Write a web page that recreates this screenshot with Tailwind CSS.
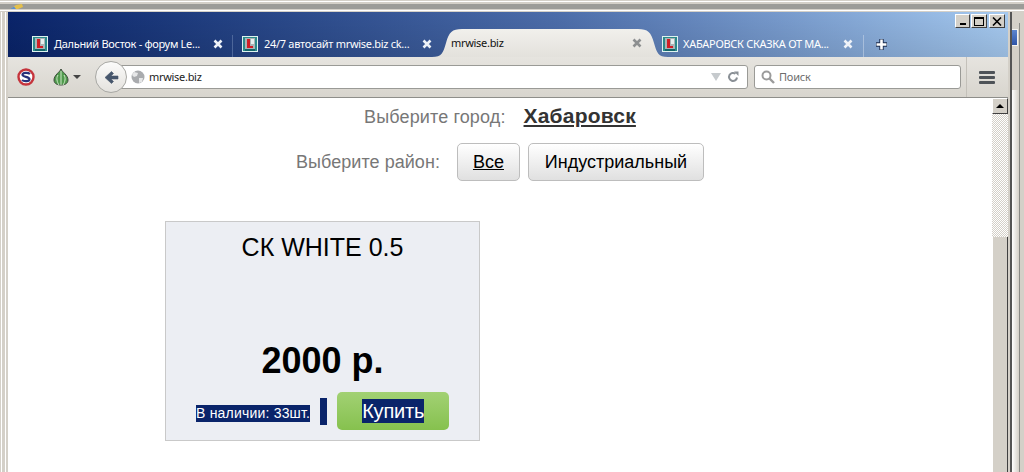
<!DOCTYPE html>
<html lang="ru">
<head>
<meta charset="utf-8">
<script src="https://cdn.jsdelivr.net/npm/@tailwindcss/browser@4"></script>
<title>mrwise.biz</title>
</head>
<body class="m-0 overflow-hidden bg-[#d4d0c8]">
<svg class="hidden"><defs>
<symbol id="fav" viewBox="0 0 16 16">
<rect width="16" height="16" fill="#dff3f0"/><rect x="1" y="1" width="14" height="14" fill="#2b8a8a"/><rect x="3" y="2" width="10" height="12" fill="#a9b4b6"/><rect x="5" y="3" width="3" height="9" fill="#d01f26"/><rect x="5" y="10" width="6" height="2" fill="#d01f26"/><rect x="9" y="3" width="3" height="5" fill="#e8eeee"/><rect x="3" y="13" width="10" height="2" fill="#14666a"/>
</symbol>
<symbol id="cls" viewBox="0 0 10 10"><path d="M1.5 1.5L8.5 8.5M8.5 1.5L1.5 8.5" stroke="currentColor" stroke-width="2.6" fill="none"/></symbol>
</defs></svg>
<div class="relative flex h-[472px] w-[1024px] flex-col overflow-hidden font-['Noto_Sans',sans-serif]">
  <!-- frame top -->
  <div class="relative flex h-[12px] shrink-0 flex-col bg-[#d4d0c8]">
    <div class="mt-[1px] h-[1px] bg-white"></div>
    <div class="mt-[2px] h-[5px] bg-[#9c9c98]"></div>
    <div class="mt-[1px] h-[1px] bg-white"></div>
    <svg class="absolute left-[10px] top-[4px]" width="13" height="5" viewBox="0 0 13 5"><path d="M0 5L6 1L12 0L13 3L8 5Z" fill="#e5c04a"/><path d="M0 5L4 2.5L6 5Z" fill="#5d8fd0"/></svg>
  </div>
  <div class="flex min-h-0 flex-1">
    <!-- left frame -->
    <div class="flex w-[8px] shrink-0 bg-[#d4d0c8]">
      <div class="ml-[1px] w-[1px] bg-white"></div>
      <div class="w-[3px] bg-[#d4d0c8]"></div>
      <div class="w-[1px] bg-white"></div>
    </div>
    <!-- browser -->
    <div class="flex w-[1000px] shrink-0 flex-col">
      <!-- tab strip -->
      <div class="relative flex h-[45px] shrink-0 items-stretch bg-gradient-to-r from-[#0a246a] via-[#4c6daa] via-55% to-[#a6caf0] text-[11px] leading-[14px] tracking-[-0.3px] text-white">
        <div class="absolute inset-0 bg-gradient-to-b from-transparent to-black/10"></div>
        <div class="absolute right-[3px] top-[2px] flex">
          <div class="flex h-[14px] w-[15px] items-end justify-center border border-b-[#404040] border-l-white border-r-[#404040] border-t-white bg-[#d4d0c8] pb-[2px]"><div class="h-[2px] w-[6px] bg-black"></div></div>
          <div class="ml-[1px] flex h-[14px] w-[16px] items-center justify-center border border-b-[#404040] border-l-white border-r-[#404040] border-t-white bg-[#d4d0c8]"><div class="h-[9px] w-[10px] border border-t-2 border-black"></div></div>
          <div class="ml-[2px] flex h-[14px] w-[16px] items-center justify-center border border-b-[#404040] border-l-white border-r-[#404040] border-t-white bg-[#d4d0c8]"><svg width="10" height="9" viewBox="0 0 10 9"><path d="M1 .5L9 8.5M9 .5L1 8.5" stroke="#000" stroke-width="1.6" fill="none"/></svg></div>
        </div>
        <div class="w-[24px] shrink-0"></div>
        <!-- tab 1 -->
        <div class="relative mt-[23px] flex h-[22px] w-[201px] shrink-0 items-center border-r border-[#5f78a8]/70 pb-[4px]">
          <svg class="shrink-0" width="16" height="16"><use href="#fav"/></svg>
          <span class="ml-[6px] w-[159px] whitespace-nowrap">Дальний Восток - форум Le...</span>
          <svg class="shrink-0 text-[#eef2f8]" width="10" height="10"><use href="#cls"/></svg>
        </div>
        <!-- tab 2 -->
        <div class="relative mt-[23px] flex h-[22px] w-[199px] shrink-0 items-center pb-[4px] pl-[9px]">
          <svg class="shrink-0" width="16" height="16"><use href="#fav"/></svg>
          <span class="ml-[6px] w-[159px] whitespace-nowrap">24/7 автосайт mrwise.biz ck...</span>
          <svg class="shrink-0 text-[#eef2f8]" width="10" height="10"><use href="#cls"/></svg>
        </div>
        <!-- tab 3 active -->
        <div class="relative mt-[17px] flex h-[28px] w-[230px] shrink-0 items-center pl-[19px] text-[#111]">
          <svg class="absolute left-0 top-0" width="236" height="28" viewBox="0 0 236 28"><defs><linearGradient id="tg" x1="0" y1="0" x2="0" y2="1"><stop offset="0" stop-color="#f1f0ec"/><stop offset="1" stop-color="#e3e1dc"/></linearGradient></defs><path d="M0 28C10 28 11 24 14 14C17 3 20 0 30 0H206C216 0 219 3 222 14C225 24 226 28 236 28Z" fill="url(#tg)"/></svg>
          <span class="relative w-[181px] whitespace-nowrap">mrwise.biz</span>
          <svg class="relative shrink-0 text-[#8d8f90]" width="10" height="10"><use href="#cls"/></svg>
        </div>
        <!-- tab 4 -->
        <div class="relative mt-[23px] flex h-[22px] w-[202px] shrink-0 items-center border-r border-[#d0dcec]/50 pb-[4px]">
          <svg class="shrink-0" width="16" height="16"><use href="#fav"/></svg>
          <span class="ml-[5px] w-[160px] whitespace-nowrap">ХАБАРОВСК СКАЗКА ОТ МА...</span>
          <svg class="shrink-0 text-[#eef2f8]" width="10" height="10"><use href="#cls"/></svg>
        </div>
        <div class="relative mt-[23px] flex h-[22px] items-center pb-[4px] pl-[11px]">
          <svg width="13" height="13" viewBox="0 0 13 13"><path d="M6.5 1V12M1 6.5H12" stroke="#1b2c4e" stroke-width="4.4"/><path d="M6.5 1.5V11.5M1.5 6.5H11.5" stroke="#fff" stroke-width="2.6"/></svg>
        </div>
      </div>
      <!-- nav toolbar -->
      <div class="relative flex h-[41px] shrink-0 items-center border-b border-[#8e8e8a] bg-gradient-to-b from-[#e6e4df] to-[#d8d5ce]">
        <svg class="ml-[9px] shrink-0" width="18" height="18" viewBox="0 0 18 18"><circle cx="9" cy="9" r="7.5" fill="#fff" stroke="#c5343c" stroke-width="2.4"/><path d="M13 6C11 4.2 5.5 4.4 5.5 6.8C5.5 9.4 12.5 8.4 12.5 11.2C12.5 13.6 7 13.8 5 12" stroke="#27307a" stroke-width="2.2" fill="none"/></svg>
        <svg class="ml-[18px] shrink-0" width="16" height="18" viewBox="0 0 16 18"><path d="M8 1C9 4 15 7 15 12C15 16 11 17 8 17C5 17 1 16 1 12C1 7 7 4 8 1Z" fill="#4f9a4c" stroke="#3c4a3c"/><path d="M8 3V17M5 7C3 10 4 14 6 17M11 7C13 10 12 14 10 17" stroke="#cfe8c9" fill="none"/></svg>
        <div class="ml-[4px] h-0 w-0 border-x-[4px] border-t-[4px] border-x-transparent border-t-[#444]"></div>
        <!-- back + url -->
        <div class="relative ml-[28px] flex h-[24px] w-[639px] shrink-0 items-center rounded-r-[3px] border border-[#9a9a96] bg-white pl-[21px] pr-[8px] text-[11px] tracking-[-0.3px] text-[#222]">
          <div class="absolute left-[-15px] top-[-5px] flex h-[32px] w-[32px] items-center justify-center rounded-full border border-[#a8a8a4] bg-gradient-to-b from-[#fbfbfa] to-[#e4e2de]">
            <svg width="15" height="15" viewBox="0 0 15 15"><path d="M1 7.5L7.5 1.5L9.5 3.5L7 6H14V9H7L9.5 11.5L7.5 13.5Z" fill="#46566c" stroke="#46566c" stroke-width=".6" stroke-linejoin="round"/></svg>
          </div>
          <svg class="relative shrink-0" width="14" height="14" viewBox="0 0 14 14"><circle cx="7" cy="7" r="6.5" fill="#a9abae"/><path d="M3 2L7 3L6 6L3 7L1 5ZM8 8L12 8L11 12L8 13Z" fill="#e6e7e8"/></svg>
          <span class="ml-[4px] flex-1">mrwise.biz</span>
          <div class="h-0 w-0 border-x-[5px] border-t-[8px] border-x-transparent border-t-[#c6cacd]"></div>
          <svg class="ml-[6px] shrink-0" width="12" height="12" viewBox="0 0 12 12"><path d="M10 6.5A4 4 0 1 1 8.5 2.8" stroke="#8a9096" stroke-width="2" fill="none"/><path d="M7 0.5H11.5V5Z" fill="#8a9096"/></svg>
        </div>
        <!-- search -->
        <div class="ml-[6px] flex h-[24px] w-[207px] shrink-0 items-center rounded-[3px] border border-[#9a9a96] bg-white pl-[6px] text-[11px] tracking-[-0.2px] text-[#6d6d6d]">
          <svg class="shrink-0" width="14" height="14" viewBox="0 0 14 14"><circle cx="5.5" cy="5.5" r="4" stroke="#9b9b9b" stroke-width="2" fill="none"/><path d="M8.5 8.5L13 13" stroke="#9b9b9b" stroke-width="2.4"/></svg>
          <span class="ml-[4px]">Поиск</span>
        </div>
        <div class="ml-[5px] h-[40px] w-[1px] bg-[#c4c1ba]"></div>
        <div class="ml-[12px] flex w-[16px] flex-col gap-[2px]">
          <div class="h-[3px] rounded-[1px] bg-[#4e5358]"></div>
          <div class="h-[3px] rounded-[1px] bg-[#4e5358]"></div>
          <div class="h-[3px] rounded-[1px] bg-[#4e5358]"></div>
        </div>
      </div>
      <!-- viewport -->
      <div class="flex min-h-0 flex-1">
        <div class="min-w-0 flex-1 bg-white font-['Liberation_Sans',sans-serif]">
          <div class="flex h-[38px] items-center justify-center">
            <span class="text-[18px] leading-[20px] tracking-[0.13px] text-[#777]">Выберите город:</span>
            <span class="mb-[2px] ml-[18px] text-[21px] font-bold leading-[24px] tracking-[0.2px] text-[#333] underline">Хабаровск</span>
          </div>
          <div class="mt-[7px] flex h-[38px] items-center pl-[288px]">
            <span class="text-[18px] leading-[20px] tracking-[0.05px] text-[#777]">Выберите район:</span>
            <div class="ml-[17px] flex h-[38px] w-[63px] items-center justify-center rounded-[5px] border border-[#bdbdbd] bg-gradient-to-b from-white to-[#e0e0e0] text-[18px] font-medium text-black underline">Все</div>
            <div class="ml-[8px] flex h-[38px] w-[176px] items-center justify-center rounded-[5px] border border-[#bdbdbd] bg-gradient-to-b from-white to-[#e0e0e0] text-[18px] text-black">Индустриальный</div>
          </div>
          <!-- card -->
          <div class="ml-[157px] mt-[40px] flex h-[220px] w-[315px] flex-col items-center border border-[#c9c9c9] bg-[#eceef3]">
            <div class="mt-[11px] text-[25px] leading-[28px] text-black">СК WHITE 0.5</div>
            <div class="mt-[80px] text-[36px] font-bold leading-[40px] text-black">2000 р.</div>
            <div class="mt-[11px] flex h-[38px] w-full items-center pl-[30px]">
              <span class="mt-[5px] bg-[#0a246a] text-[14px] leading-[17px] tracking-[0.2px] text-white">В наличии: 33шт.</span>
              <div class="ml-[10px] mt-[1px] h-[27px] w-[7px] bg-[#0a246a]"></div>
              <div class="ml-[10px] flex h-[38px] w-[112px] items-center justify-center rounded-[5px] bg-gradient-to-b from-[#a2d173] to-[#86c14e]">
                <span class="bg-[#0a246a] text-[20px] leading-[24px] tracking-[-0.2px] text-white">Купить</span>
              </div>
            </div>
          </div>
        </div>
        <!-- scrollbar -->
        <div class="flex w-[16px] shrink-0 flex-col bg-[repeating-conic-gradient(#d4d0c8_0_25%,#fff_0_50%)] bg-[length:2px_2px]">
          <div class="flex h-[16px] shrink-0 items-center justify-center border border-b-[#404040] border-l-white border-r-[#404040] border-t-white bg-[#d4d0c8]">
            <div class="h-0 w-0 border-x-[4px] border-b-[4px] border-x-transparent border-b-black"></div>
          </div>
          <div class="mt-[123px] flex-1 border-l border-r border-l-white border-r-[#404040] bg-[#d4d0c8]"></div>
        </div>
      </div>
    </div>
    <!-- right frame: edge of this window, then the window behind it -->
    <div class="relative flex w-[16px] shrink-0 bg-[#d4d0c8]">
      <div class="ml-[2px] w-[2px] bg-[#555]"></div>
      <div class="absolute left-[4px] top-[12px] flex h-[26px] w-[8px] items-center">
        <div class="h-[17px] w-[6px] border border-l-0 border-[#f4f4f0] bg-gradient-to-b from-[#5c86d0] to-[#2f55a8]"></div>
      </div>
      <div class="absolute bottom-0 left-[4px] top-[78px] w-[7px] bg-gradient-to-r from-white to-[#d4d0c8]"></div>
      <div class="absolute bottom-0 left-[11px] top-[11px] w-[1px] bg-[#8a8a86]"></div>
    </div>
  </div>
</div>
</body>
</html>
